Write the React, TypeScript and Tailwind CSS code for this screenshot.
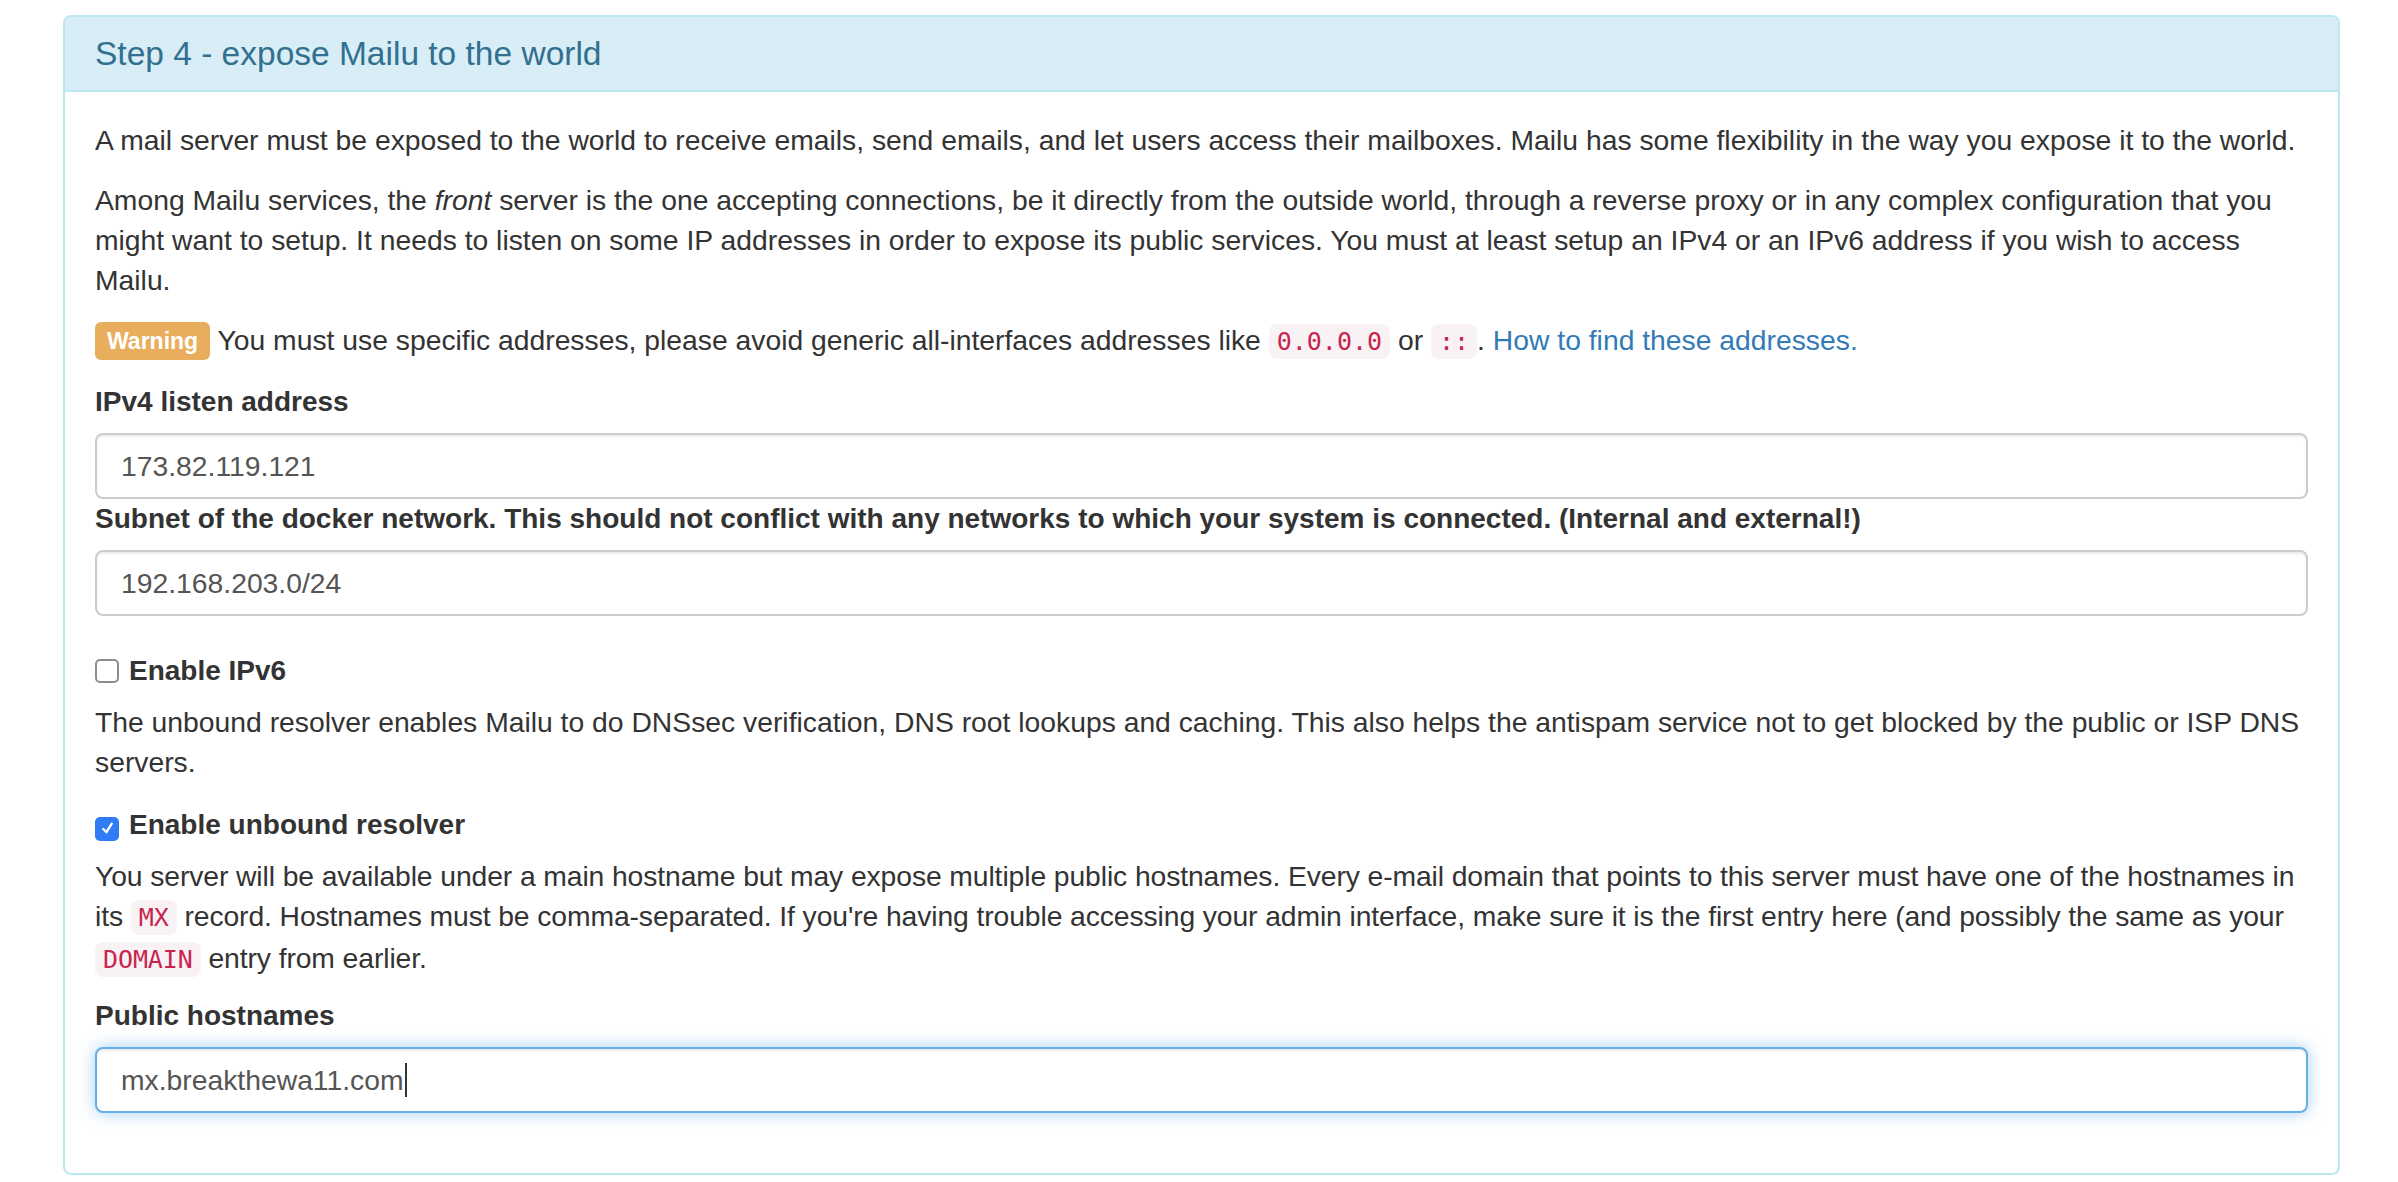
import React from 'react';

const sans = { fontFamily: '"Liberation Sans", Arial, Helvetica, sans-serif' };

const Code: React.FC<{ children: React.ReactNode }> = ({ children }) => (
  <code className="bg-[#f9f2f4] text-[#c7254e] text-[25px] px-[8px] py-[3px] rounded-[8px] font-['DejaVu_Sans_Mono',monospace]">
    {children}
  </code>
);

const Checkbox: React.FC<{ checked?: boolean }> = ({ checked }) =>
  checked ? (
    <span className="inline-flex items-center justify-center w-[24px] h-[24px] rounded-[5px] bg-[#2f7cf6] mr-[10px] align-[-3px]">
      <svg viewBox="0 0 16 16" className="w-[17px] h-[17px]">
        <path d="M4 8.5 L7 11.5 L12 3.5" fill="none" stroke="white" strokeWidth="2.2" strokeLinecap="round" strokeLinejoin="round" />
      </svg>
    </span>
  ) : (
    <span className="inline-block w-[24px] h-[24px] rounded-[5px] border-2 border-[#8d8d8d] bg-white mr-[10px] align-[-3px]" />
  );

const TextInput: React.FC<{ value: string; focused?: boolean }> = ({ value, focused }) => (
  <div
    className={
      focused
        ? 'h-[66px] flex items-center px-[24px] rounded-[8px] border-2 border-[#66afe9] bg-white shadow-[inset_0_2px_2px_rgba(0,0,0,0.075),0_0_16px_rgba(102,175,233,0.6)]'
        : 'h-[66px] flex items-center px-[24px] rounded-[8px] border-2 border-[#cccccc] bg-white shadow-[inset_0_2px_2px_rgba(0,0,0,0.075)]'
    }
  >
    <span className="text-[#555] text-[28.3px]">{value}</span>
    {focused && <span className="w-[2px] h-[34px] bg-[#333] ml-[1px]" />}
  </div>
);

export default function App() {
  return (
    <div className="bg-white min-h-[1182px] pt-[15px] pl-[63px] pr-[58px]" style={sans}>
      <div className="border-2 border-[#bce8f1] rounded-[8px] bg-white">
        {/* Panel heading */}
        <div className="bg-[#d9edf7] border-b-2 border-[#bce8f1] rounded-t-[6px] px-[30px] pt-[19px] pb-[19px]">
          <h3 className="text-[33.5px] leading-[35px] text-[#31708f]">Step 4 - expose Mailu to the world</h3>
        </div>

        {/* Panel body */}
        <div className="px-[30px] pt-[28px] pb-[60px] text-[28.3px] leading-[40px] text-[#333]">
          <p className="mb-[20px]">
            A mail server must be exposed to the world to receive emails, send emails, and let users access their mailboxes. Mailu has some flexibility in the way you expose it to the world.
          </p>
          <p className="mb-[20px]">
            Among Mailu services, the <em>front</em> server is the one accepting connections, be it directly from the outside world, through a reverse proxy or in any complex configuration that you might want to setup. It needs to listen on some IP addresses in order to expose its public services. You must at least setup an IPv4 or an IPv6 address if you wish to access Mailu.
          </p>
          <p className="mb-[20px]">
            <span className="inline-block bg-[#e9ae5d] text-white font-bold text-[23px] leading-[38px] px-[12px] rounded-[6px] align-[1px]">Warning</span>{' '}
            You must use specific addresses, please avoid generic all-interfaces addresses like <Code>0.0.0.0</Code> or <Code>::</Code>.{' '}
            <a className="text-[#337ab7]">How to find these addresses.</a>
          </p>

          <label className="block font-bold text-[28px] mb-[11px]">IPv4 listen address</label>
          <TextInput value="173.82.119.121" />

          <label className="block font-bold text-[28px] mb-[11px]">
            Subnet of the docker network. This should not conflict with any networks to which your system is connected. (Internal and external!)
          </label>
          <TextInput value="192.168.203.0/24" />

          <div className="mt-[35px] mb-[11px] font-bold text-[28px]">
            <Checkbox />
            Enable IPv6
          </div>
          <p className="mb-[23px]">
            The unbound resolver enables Mailu to do DNSsec verification, DNS root lookups and caching. This also helps the antispam service not to get blocked by the public or ISP DNS servers.
          </p>

          <div className="mb-[11px] font-bold text-[28px]">
            <Checkbox checked />
            Enable unbound resolver
          </div>
          <p className="mb-[16px] tracking-[-0.1px]">
            You server will be available under a main hostname but may expose multiple public hostnames. Every e-mail domain that points to this server must have one of the hostnames in its <Code>MX</Code> record. Hostnames must be comma-separated. If you're having trouble accessing your admin interface, make sure it is the first entry here (and possibly the same as your <Code>DOMAIN</Code> entry from earlier.
          </p>

          <label className="block font-bold text-[28px] mb-[11px]">Public hostnames</label>
          <TextInput value="mx.breakthewa11.com" focused />
        </div>
      </div>
    </div>
  );
}
